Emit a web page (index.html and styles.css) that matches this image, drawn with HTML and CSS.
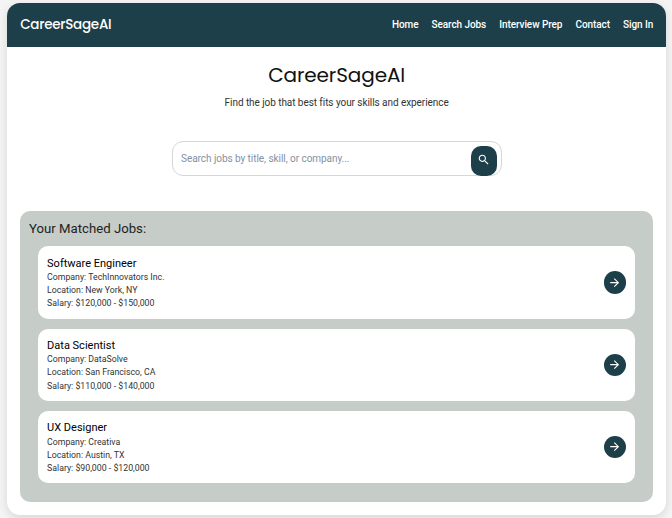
FILE: index.html
```html
<!DOCTYPE html>
<html lang="en">
<head>
<meta charset="utf-8">
<title>CareerSageAI</title>
<link rel="stylesheet" href="styles.css">
</head>
<body>
<div class="app">
  <header class="header">
    <div class="brand">CareerSageAI</div>
    <nav class="nav"><a>Home</a><a>Search Jobs</a><a>Interview Prep</a><a>Contact</a><a>Sign In</a></nav>
  </header>
  <main class="main">
    <h1 class="title">CareerSageAI</h1>
    <p class="tagline">Find the job that best fits your skills and experience</p>
    <div class="search">
      <span class="placeholder">Search jobs by title, skill, or company...</span>
      <button class="search-btn" aria-label="Search"><svg viewBox="0 0 24 24"><path d="M15.5 14h-.79l-.28-.27C15.41 12.59 16 11.11 16 9.5 16 5.91 13.09 3 9.5 3S3 5.91 3 9.5 5.91 16 9.5 16c1.61 0 3.09-.59 4.23-1.57l.27.28v.79l5 4.99L20.49 19l-4.99-5zm-6 0C7.01 14 5 11.99 5 9.5S7.01 5 9.5 5 14 7.01 14 9.5 11.99 14 9.5 14z"/></svg></button>
    </div>
    <section class="jobs">
      <h2 class="jobs-title">Your Matched Jobs:</h2>
      <article class="card">
        <div class="info"><h3>Software Engineer</h3><p>Company: TechInnovators Inc.</p><p>Location: New York, NY</p><p>Salary: $120,000 - $150,000</p></div>
        <button class="go" aria-label="Open"><svg viewBox="0 0 24 24"><path d="M12 4l-1.41 1.41L16.17 11H4v2h12.17l-5.58 5.59L12 20l8-8z"/></svg></button>
      </article>
      <article class="card">
        <div class="info"><h3>Data Scientist</h3><p>Company: DataSolve</p><p>Location: San Francisco, CA</p><p>Salary: $110,000 - $140,000</p></div>
        <button class="go" aria-label="Open"><svg viewBox="0 0 24 24"><path d="M12 4l-1.41 1.41L16.17 11H4v2h12.17l-5.58 5.59L12 20l8-8z"/></svg></button>
      </article>
      <article class="card">
        <div class="info"><h3>UX Designer</h3><p>Company: Creativa</p><p>Location: Austin, TX</p><p>Salary: $90,000 - $120,000</p></div>
        <button class="go" aria-label="Open"><svg viewBox="0 0 24 24"><path d="M12 4l-1.41 1.41L16.17 11H4v2h12.17l-5.58 5.59L12 20l8-8z"/></svg></button>
      </article>
    </section>
  </main>
</div>
</body>
</html>
```
FILE: styles.css
```css
* { box-sizing: border-box; margin: 0; padding: 0; }
body {
  background: #f4f4f4;
  font-family: Roboto, "Liberation Sans", sans-serif;
  padding: 3px 5.7px 0 7px;
  height: 518px;
  overflow: hidden;
}
.app {
  height: 512px;
  background: #fff;
  border-radius: 13px;
  overflow: hidden;
  box-shadow: 0 3px 10px rgba(0, 0, 0, .12);
}
.header {
  height: 43.7px;
  background: #1c3f4a;
  color: #fff;
  display: flex;
  align-items: center;
  justify-content: space-between;
  padding: 0 13.2px;
}
.brand, .title { font-family: Poppins, Inter, sans-serif; }
.brand { font-size: 13.5px; font-weight: 500; letter-spacing: -.27px; }
.nav { display: flex; gap: 13.1px; font-size: 10px; font-weight: 500; letter-spacing: -.085px; }
.main { padding: 0 13.3px; }
.title {
  margin-top: 13.3px;
  text-align: center;
  font-size: 20px;
  letter-spacing: -.1px;
  line-height: 30px;
  font-weight: 400;
  color: #111;
}
.tagline {
  margin-top: 5px;
  text-align: center;
  font-size: 10px;
  letter-spacing: -.06px;
  line-height: 15px;
  color: #333;
}
.search {
  width: 330px;
  height: 35px;
  margin: 31px auto 0;
  border: 1px solid #d6d6d6;
  border-radius: 11px;
  display: flex;
  justify-content: space-between;
  padding: 0 3.5px 0 8.4px;
}
.placeholder { font-size: 10px; letter-spacing: -.05px; line-height: 34px; color: #8590a3; }
.search-btn {
  width: 26.5px;
  height: 30.5px;
  margin-top: 4px;
  border: 0;
  border-radius: 10px;
  background: #1c3f4a;
  display: grid;
  place-items: center;
}
.search-btn svg { width: 13.5px; height: 13.5px; margin-bottom: 3px; fill: #fff; }
.jobs {
  height: 291px;
  margin-top: 35px;
  border-radius: 10px;
  background: #c6ccc8;
  padding: 8.3px 18.2px 0;
}
.jobs-title {
  margin-left: -9.5px;
  font-size: 13.2px;
  line-height: 20px;
  font-weight: 400;
  color: #222;
  margin-bottom: 7.1px;
}
.card {
  height: 72.4px;
  margin-bottom: 9.9px;
  background: #fff;
  border-radius: 10px;
  padding: 9.4px 8.6px;
  display: flex;
  align-items: center;
  justify-content: space-between;
}
.info { align-self: flex-start; }
.info h3 { font-size: 11px; line-height: 16px; font-weight: 400; color: #000; margin-bottom: -.7px; }
.info p { font-size: 8.75px; line-height: 13.1px; color: #333; }
.go {
  width: 22.4px;
  height: 22.4px;
  border: 0;
  border-radius: 50%;
  background: #1c3f4a;
  display: grid;
  place-items: center;
}
.go svg { width: 13.3px; height: 13.3px; fill: #fff; }
```
